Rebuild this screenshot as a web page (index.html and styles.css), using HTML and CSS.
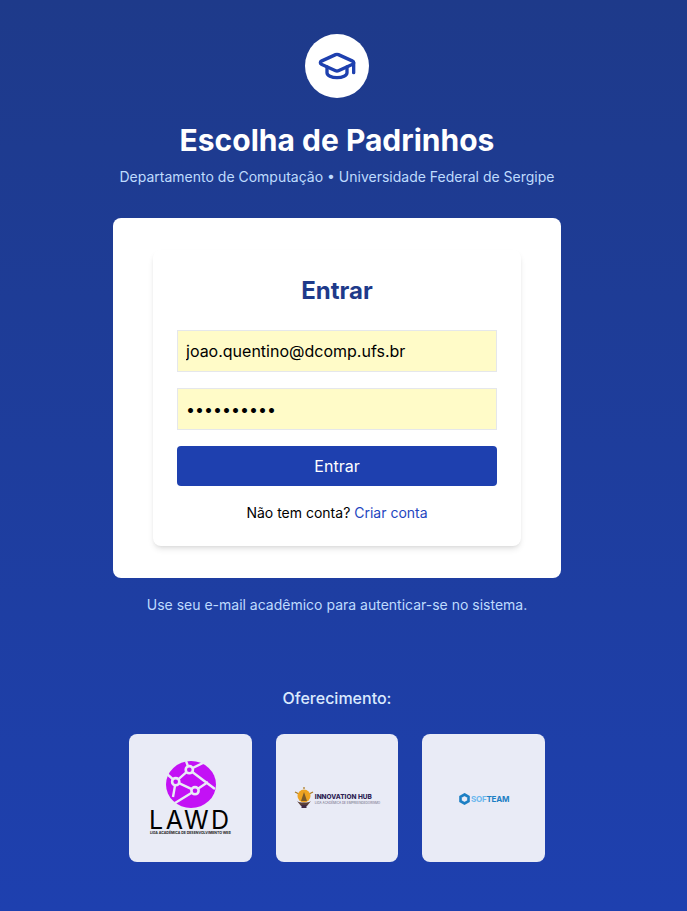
FILE: index.html
```html
<!DOCTYPE html>
<html lang="pt-BR">
<head>
<meta charset="utf-8">
<title>Escolha de Padrinhos</title>
<link rel="stylesheet" href="styles.css">
</head>
<body>
<main class="page">
  <header class="head">
    <div class="badge">
      <svg width="40" height="40" viewBox="0 0 24 24" fill="none" stroke="#1e40af" stroke-width="2" stroke-linecap="round" stroke-linejoin="round">
        <path d="M21.42 10.92a1 1 0 0 0-.02-1.84L12.83 5.18a2 2 0 0 0-1.66 0L2.6 9.08a1 1 0 0 0 0 1.83l8.57 3.91a2 2 0 0 0 1.66 0z"/>
        <path d="M22 10v6"/>
        <path d="M6 12.5V16a6 3 0 0 0 12 0v-3.5"/>
      </svg>
    </div>
    <h1 class="title">Escolha de Padrinhos</h1>
    <p class="subtitle">Departamento de Computação • Universidade Federal de Sergipe</p>
  </header>

  <section class="panel">
    <form class="card">
      <h2 class="card-title">Entrar</h2>
      <input class="field" type="email" value="joao.quentino@dcomp.ufs.br">
      <input class="field" type="password" value="1234567890">
      <button class="submit" type="button">Entrar</button>
      <p class="signup">Não tem conta? <a class="link" href="#">Criar conta</a></p>
    </form>
  </section>

  <p class="hint">Use seu e-mail acadêmico para autenticar-se no sistema.</p>

  <p class="sponsor-label">Oferecimento:</p>
  <div class="sponsors">
    <div class="tile">
      <div class="lawd">
        <svg class="lawd-globe" width="50" height="47" viewBox="0 0 50 47">
          <ellipse cx="25" cy="23.500" rx="25" ry="23.500" fill="#c311f5"/>
          <g stroke="#e9ebf6" stroke-width="2.400" fill="none">
            <path d="M23.300 8.700 L9.700 20.700 L29 29.700"/>
            <path d="M23.300 8.700 L49 28 M29 29.700 L42 21 M29 29.700 L9 42 M9.700 20.700 L7 36 M9.700 20.700 L1 13 M23.300 8.700 L37 2 M23.300 8.700 L20 0"/>
          </g>
          <g fill="#c311f5" stroke="#e9ebf6" stroke-width="2.600">
            <circle cx="23.300" cy="8.700" r="3.600"/>
            <circle cx="9.700" cy="20.700" r="3.600"/>
            <circle cx="29" cy="29.700" r="3.600"/>
          </g>
        </svg>
        <span class="lawd-name">LAWD</span>
        <span class="lawd-sub">LIGA ACADÊMICA DE DESENVOLVIMENTO WEB</span>
      </div>
    </div>
    <div class="tile">
      <div class="hub">
        <svg class="hub-icon" width="20" height="22" viewBox="0 0 20 22">
          <path d="M1 5 L5 7 M19 5 L15 7 M10 0 V2" stroke="#a9791f" stroke-width="1.200"/>
          <circle cx="10" cy="9" r="6.500" fill="#eea321"/>
          <path d="M7 14 L10 5 L13 14 Z" fill="#7a5a2a"/>
          <path d="M3 14 C5 16 15 16 17 14 L13 19 H7 Z" fill="#5a3f3a"/>
          <rect x="7.500" y="18" width="5" height="3" fill="#3f2a44"/>
        </svg>
        <div class="hub-text">
          <span class="hub-name">INNOVATION HUB</span>
          <span class="hub-sub">LIGA ACADÊMICA DE EMPREENDEDORISMO</span>
        </div>
      </div>
    </div>
    <div class="tile">
      <div class="soft">
        <svg width="11" height="12" viewBox="0 0 11 12">
          <path d="M5.500 1.500 L9.500 3.800 V8.200 L5.500 10.500 L1.500 8.200 V3.800 Z" fill="none" stroke="#1c7fc4" stroke-width="2.600"/>
        </svg>
        <span class="soft-name"><span class="soft-light">SOF</span>TEAM</span>
      </div>
    </div>
  </div>
</main>
</body>
</html>
```
FILE: styles.css
```css
* { box-sizing: border-box; }
html, body { margin: 0; height: 100%; }
body {
  font-family: Inter, "Liberation Sans", sans-serif;
  background: linear-gradient(180deg, #1e3a8a 0%, #1e40af 100%);
  min-height: 911px;
  padding-right: 13px;
}
.page {
  width: 448px;
  margin: 0 auto;
  padding-top: 34px;
  display: flex;
  flex-direction: column;
  align-items: center;
}
.head { display: flex; flex-direction: column; align-items: center; }
.badge {
  width: 64px;
  height: 64px;
  border-radius: 50%;
  background: #fff;
  display: flex;
  align-items: center;
  justify-content: center;
}
.title {
  margin: 24px 0 0;
  font-size: 30px;
  line-height: 36px;
  font-weight: 700;
  color: #fff;
  white-space: nowrap;
}
.subtitle {
  margin: 9px 0 0;
  font-size: 14px;
  line-height: 20px;
  color: #bfdbfe;
  white-space: nowrap;
}
.panel {
  width: 448px;
  margin-top: 31px;
  padding: 32px 40px;
  background: #fff;
  border-radius: 8px;
}
.card {
  display: flex;
  flex-direction: column;
  padding: 24px 24px 23px;
  background: #fff;
  border-radius: 8px;
  box-shadow: 0 4px 6px -1px rgba(0,0,0,.1), 0 2px 4px -2px rgba(0,0,0,.1);
}
.card-title {
  margin: 0 0 22px;
  text-align: center;
  font-size: 24px;
  line-height: 34px;
  font-weight: 700;
  color: #1e3a8a;
}
.field {
  display: block;
  width: 100%;
  height: 42px;
  margin: 0 0 16px;
  padding: 0 8px;
  font-family: Inter, "Liberation Sans", sans-serif;
  font-size: 16px;
  color: #000;
  background: #fffbc8;
  border: 1px solid #e5e7eb;
  border-radius: 0;
  outline: none;
}
.submit {
  height: 40px;
  border: 0;
  border-radius: 4px;
  background: #1e40af;
  color: #fff;
  font-family: Inter, "Liberation Sans", sans-serif;
  font-size: 16px;
}
.signup {
  margin: 17px 0 0;
  text-align: center;
  font-size: 14px;
  line-height: 20px;
  color: #000;
}
.link { color: #1e46c0; text-decoration: none; }
.hint {
  margin: 17px 0 0;
  font-size: 14px;
  line-height: 20px;
  color: #bfdbfe;
}
.sponsor-label {
  margin: 71px 0 0;
  font-size: 16px;
  line-height: 24px;
  font-weight: 500;
  color: #dbeafe;
}
.sponsors {
  width: 416px;
  margin-top: 24px;
  display: grid;
  grid-template-columns: repeat(3, 1fr);
  gap: 24px;
}
.tile {
  height: 128px;
  border-radius: 8px;
  background: #e9ebf6;
  display: flex;
  align-items: center;
  justify-content: center;
}
.lawd { display: flex; flex-direction: column; align-items: center; }
.lawd-globe { display: block; margin-left: 2px; }
.lawd-name {
  font-size: 25px;
  line-height: 20px;
  letter-spacing: 2.500px;
  font-weight: 400;
  color: #000;
  margin-top: 2px;
  white-space: nowrap;
}
.lawd-sub {
  margin-top: 1px;
  font-size: 3.500px;
  line-height: 4px;
  font-weight: 700;
  color: #222;
  white-space: nowrap;
}
.hub { display: flex; align-items: center; gap: 1px; margin-top: -1px; }
.hub-text { display: flex; flex-direction: column; margin-top: 4px; }
.hub-name {
  font-size: 6.500px;
  line-height: 7px;
  font-weight: 800;
  color: #2e1f55;
  white-space: nowrap;
}
.hub-sub {
  font-size: 3.100px;
  line-height: 4px;
  color: #6a6480;
  white-space: nowrap;
}
.soft { display: flex; align-items: center; gap: 1px; margin-top: 1px; margin-left: 1px; }
.soft-name {
  font-size: 8px;
  line-height: 10px;
  font-weight: 700;
  letter-spacing: -.2px;
  color: #1c7fc4;
}
.soft-light { color: #6ab8ee; }
```
